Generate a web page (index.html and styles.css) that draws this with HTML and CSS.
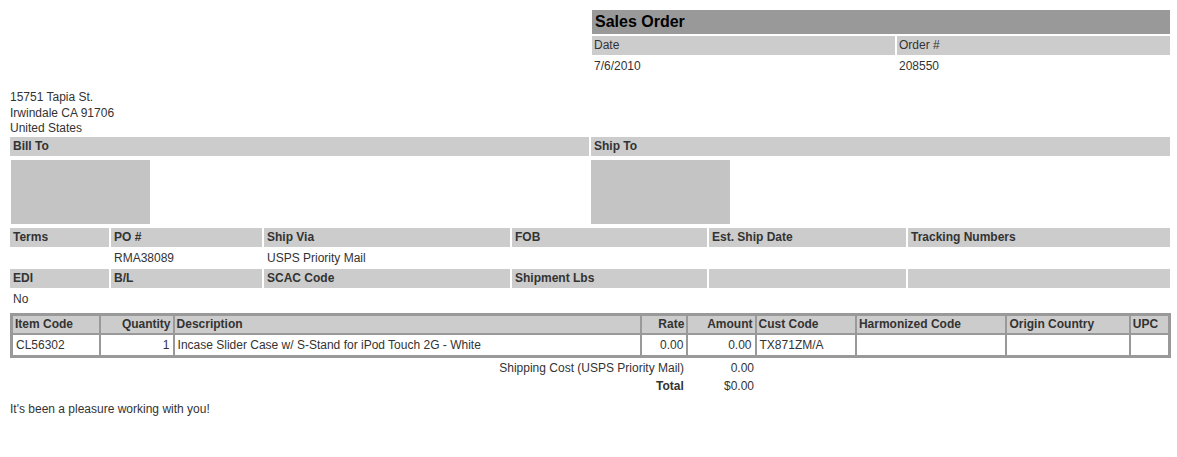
FILE: index.html
```html
<!DOCTYPE html>
<html>
<head>
<meta charset="utf-8">
<link rel="stylesheet" href="styles.css">
</head>
<body>
<div class="page">
  <div class="top">
    <div class="spacer"></div>
    <div class="so">
      <div class="so-title">Sales Order</div>
      <div class="so-grid">
        <div class="lab">Date</div>
        <div class="lab">Order #</div>
        <div class="val">7/6/2010</div>
        <div class="val">208550</div>
      </div>
    </div>
  </div>

  <div class="address">
    <div>15751 Tapia St.</div>
    <div>Irwindale CA 91706</div>
    <div>United States</div>
  </div>

  <div class="parties">
    <div class="hd">Bill To</div>
    <div class="hd">Ship To</div>
    <div class="blk-cell bill"><div class="blk"></div></div>
    <div class="blk-cell"><div class="blk"></div></div>
  </div>

  <div class="info">
    <div class="hd">Terms</div>
    <div class="hd">PO #</div>
    <div class="hd">Ship Via</div>
    <div class="hd">FOB</div>
    <div class="hd">Est. Ship Date</div>
    <div class="hd">Tracking Numbers</div>
    <div class="v"></div>
    <div class="v">RMA38089</div>
    <div class="v">USPS Priority Mail</div>
    <div class="v"></div>
    <div class="v"></div>
    <div class="v"></div>
    <div class="hd">EDI</div>
    <div class="hd">B/L</div>
    <div class="hd">SCAC Code</div>
    <div class="hd">Shipment Lbs</div>
    <div class="hd"></div>
    <div class="hd"></div>
    <div class="v">No</div>
    <div class="v"></div>
    <div class="v"></div>
    <div class="v"></div>
    <div class="v"></div>
    <div class="v"></div>
  </div>

  <table class="items">
    <colgroup>
      <col class="c-code"><col class="c-qty"><col class="c-desc"><col class="c-rate"><col class="c-amt"><col class="c-cust"><col class="c-harm"><col class="c-orig"><col class="c-upc">
    </colgroup>
    <thead>
      <tr>
        <th>Item Code</th>
        <th class="r">Quantity</th>
        <th>Description</th>
        <th class="r">Rate</th>
        <th class="r">Amount</th>
        <th>Cust Code</th>
        <th>Harmonized Code</th>
        <th>Origin Country</th>
        <th>UPC</th>
      </tr>
    </thead>
    <tbody>
      <tr>
        <td>CL56302</td>
        <td class="r">1</td>
        <td>Incase Slider Case w/ S-Stand for iPod Touch 2G - White</td>
        <td class="r">0.00</td>
        <td class="r">0.00</td>
        <td>TX871ZM/A</td>
        <td></td>
        <td></td>
        <td></td>
      </tr>
    </tbody>
  </table>

  <div class="totals">
    <div class="t-lab">Shipping Cost (USPS Priority Mail)</div>
    <div class="t-val">0.00</div>
    <div class="t-lab"><span class="t-bold">Total</span></div>
    <div class="t-val">$0.00</div>
  </div>

  <div class="thanks">It's been a pleasure working with you!</div>
</div>
</body>
</html>
```

FILE: styles.css
```css
html, body {
  margin: 0;
  padding: 0;
  background: #fff;
}
body {
  font-family: "Liberation Sans", Arial, sans-serif;
  font-size: 12px;
  color: #333;
}
.page {
  width: 1160px;
  padding: 10px 0 0 10px;
}
.top {
  display: grid;
  grid-template-columns: 582px 578px;
}
.so-title {
  background: #999;
  height: 24px;
  line-height: 24px;
  padding-left: 3px;
  font-size: 16px;
  font-weight: bold;
  color: #000;
}
.so-grid {
  display: grid;
  grid-template-columns: 303px 273px;
  column-gap: 2px;
  row-gap: 2px;
  margin-top: 2px;
}
.so-grid .lab {
  background: #ccc;
  height: 19px;
  line-height: 19px;
  padding-left: 2px;
}
.so-grid .val {
  height: 18px;
  line-height: 18px;
  padding-left: 2px;
}
.address {
  margin-top: 15px;
  line-height: 15.5px;
}
.parties {
  display: grid;
  grid-template-columns: 579px 579px;
  column-gap: 2px;
  row-gap: 4px;
}
.hd {
  background: #ccc;
  height: 19px;
  line-height: 19px;
  padding-left: 3px;
  font-weight: bold;
}
.blk-cell.bill {
  padding-left: 1px;
}
.blk {
  width: 139px;
  height: 64px;
  background: #c4c4c4;
}
.info {
  display: grid;
  grid-template-columns: 99px 151px 246px 195px 197px 262px;
  column-gap: 2px;
  row-gap: 2px;
  margin-top: 4px;
}
.info .v {
  height: 18px;
  line-height: 18px;
  padding-left: 3px;
}
.items {
  margin-top: 5px;
  width: 1161px;
  table-layout: fixed;
  border-collapse: separate;
  border-spacing: 2px;
  border: 1px solid #999;
  background: #999;
}
.items th, .items td {
  padding: 0 2px;
  text-align: left;
  white-space: nowrap;
  overflow: hidden;
}
.items th {
  background: #ccc;
  height: 17px;
  line-height: 17px;
  font-weight: bold;
}
.items td {
  background: #fff;
  height: 18px;
  line-height: 18px;
  border: 1px solid #fff;
}
.items .r {
  text-align: right;
}
.c-code { width: 86px; }
.c-qty { width: 71px; }
.c-desc { width: 464px; }
.c-rate { width: 44px; }
.c-amt { width: 66px; }
.c-cust { width: 98px; }
.c-harm { width: 148px; }
.c-orig { width: 121px; }
.c-upc { width: 37px; }
.totals {
  display: grid;
  grid-template-columns: 674px 70px;
  line-height: 18px;
  margin-top: 1px;
}
.t-lab, .t-val {
  text-align: right;
}
.t-bold {
  font-weight: bold;
  display: inline-block;
  width: 28px;
  text-align: left;
}
.thanks {
  margin-top: 5px;
  line-height: 18px;
}
```
